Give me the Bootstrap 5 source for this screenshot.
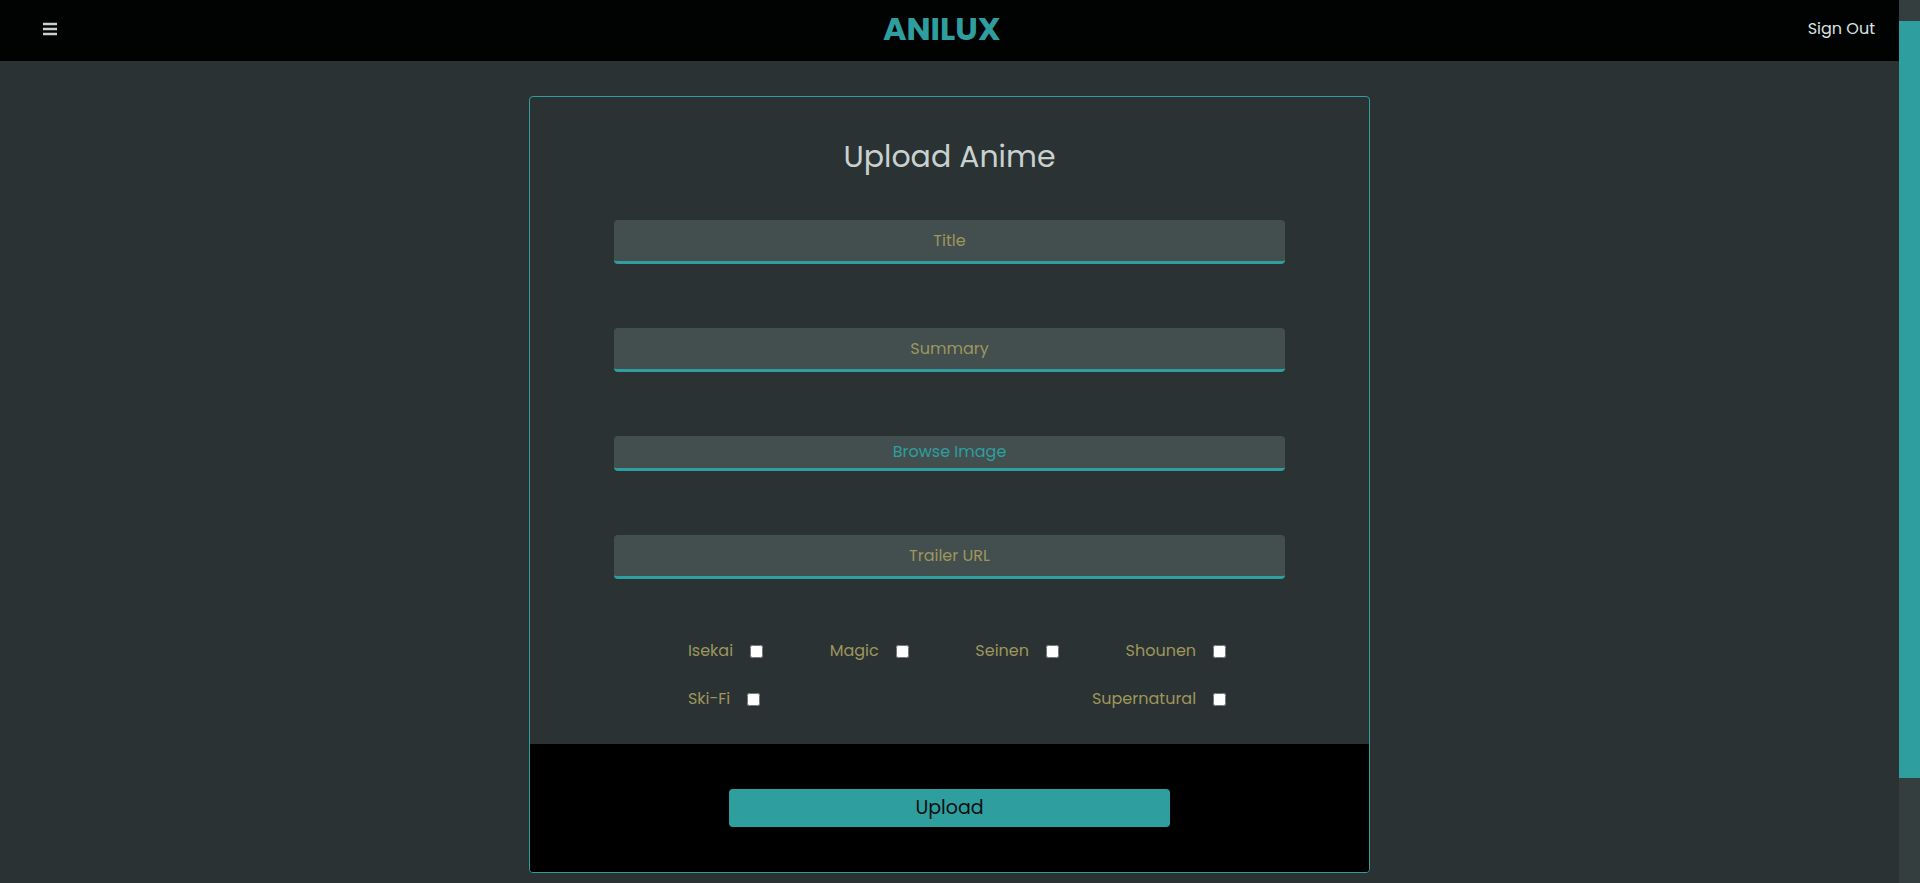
<!DOCTYPE html>
<html lang="en">
<head>
<meta charset="utf-8">
<meta name="viewport" content="width=device-width, initial-scale=1">
<title>Anilux - Upload Anime</title>
<link href="https://cdn.jsdelivr.net/npm/bootstrap@5.3.0/dist/css/bootstrap.min.css" rel="stylesheet">
<style>
  :root { --teal: #2f9e9f; --night: #2a3233; --field: #424f4e; --gold: #9e965c; --mist: #c9d1cf; }
  body { background: var(--night); color: var(--mist); font-family: Poppins, Inter, sans-serif; font-size: 16px; line-height: 24px; }
  .topbar { background: #010202; padding: 9px 24px 12px; }
  .menu-btn { padding: 10px 19px; color: var(--mist); line-height: 0; border: 0; background: none; }
  .logo { color: var(--teal); font-size: 32px; line-height: 40px; }
  .signout { color: #dce2e0; font-size: 16px; }
  .upload-card { --bs-card-bg: transparent; --bs-card-border-radius: 4px; max-width: 841px; margin: 35px auto 10px; border: 1px solid var(--teal); color: var(--mist); overflow: hidden; }
  .upload-body { padding: 36px 10% 33px; }
  .upload-title { font-size: 30px; line-height: 48px; margin-bottom: 39px; }
  .fields { gap: 64px; margin-bottom: 60px; }
  .field { display: block; width: 100%; height: 44px; background: var(--field); border: 0; border-bottom: 3px solid var(--teal); border-radius: 4px; color: var(--mist); text-align: center; outline: 0; padding: 0 12px; }
  .field::placeholder { color: var(--gold); opacity: 1; }
  .browse { height: 35px; line-height: 32px; color: var(--teal); cursor: pointer; }
  .genres { padding: 0 59px 0 74px; gap: 24px; color: var(--gold); }
  .genre { gap: 17px; }
  .genre input { width: 13px; height: 13px; margin: 1px 0 0; }
  .upload-foot { background: #000; padding: 45px 24px; }
  .upload-btn { width: 441px; max-width: 100%; height: 38px; padding: 0; background: var(--teal); color: #0a1010; border: 0; border-radius: 4px; font-size: 19px; line-height: 38px; }
  .rail { width: 21px; background: #343e3f; padding: 21px 0; }
  .rail-thumb { height: 90%; background: var(--teal); }
</style>
</head>
<body class="d-flex vh-100 overflow-hidden">
<div class="flex-grow-1 overflow-hidden">
  <header class="topbar d-flex justify-content-between align-items-center">
    <button class="menu-btn" type="button" aria-label="Menu">
      <svg width="14" height="14" viewBox="0 0 14 14" fill="currentColor" aria-hidden="true"><path d="M0 1h14v2H0zM0 6h14v2H0zM0 11h14v2H0z"/><path opacity=".25" d="M0 0h14v1H0zM0 3h14v1H0zM0 5h14v1H0zM0 8h14v1H0zM0 10h14v1H0zM0 13h14v1H0z"/></svg>
    </button>
    <a class="logo fw-bold text-decoration-none" href="#">ANILUX</a>
    <a class="signout text-decoration-none" href="#">Sign Out</a>
  </header>
  <main>
    <form class="card upload-card">
      <div class="upload-body">
        <h1 class="upload-title text-center fw-normal">Upload Anime</h1>
        <div class="fields d-flex flex-column">
          <input class="field" type="text" placeholder="Title" aria-label="Title">
          <input class="field" type="text" placeholder="Summary" aria-label="Summary">
          <div>
            <label class="field browse" for="image">Browse Image</label>
            <input id="image" type="file" accept="image/*" hidden>
          </div>
          <input class="field" type="url" placeholder="Trailer URL" aria-label="Trailer URL">
        </div>
        <div class="genres d-flex flex-column">
          <div class="d-flex flex-wrap justify-content-between">
            <div class="genre d-flex align-items-center"><label for="isekai">Isekai</label><input type="checkbox" id="isekai"></div>
            <div class="genre d-flex align-items-center"><label for="magic">Magic</label><input type="checkbox" id="magic"></div>
            <div class="genre d-flex align-items-center"><label for="seinen">Seinen</label><input type="checkbox" id="seinen"></div>
            <div class="genre d-flex align-items-center"><label for="shounen">Shounen</label><input type="checkbox" id="shounen"></div>
          </div>
          <div class="d-flex flex-wrap justify-content-between">
            <div class="genre d-flex align-items-center"><label for="skifi">Ski-Fi</label><input type="checkbox" id="skifi"></div>
            <div class="genre d-flex align-items-center"><label for="supernatural">Supernatural</label><input type="checkbox" id="supernatural"></div>
          </div>
        </div>
      </div>
      <div class="upload-foot text-center">
        <button class="btn upload-btn" type="submit">Upload</button>
      </div>
    </form>
  </main>
</div>
<div class="rail flex-shrink-0" aria-hidden="true"><div class="rail-thumb"></div></div>
<script src="https://cdn.jsdelivr.net/npm/bootstrap@5.3.0/dist/js/bootstrap.bundle.min.js"></script>
</body>
</html>
